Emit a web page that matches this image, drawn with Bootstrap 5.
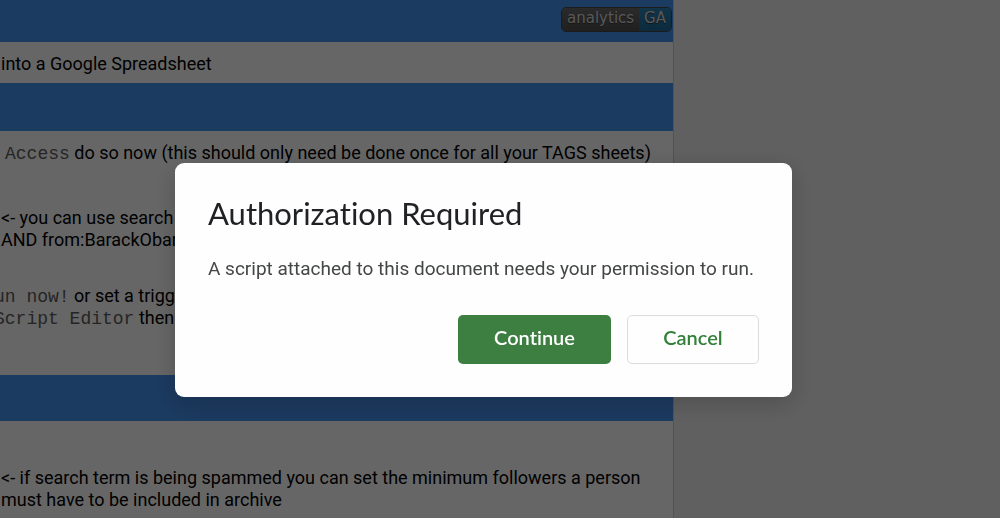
<!DOCTYPE html>
<html lang="en">
<head>
<meta charset="utf-8">
<meta name="viewport" content="width=device-width, initial-scale=1">
<title>Authorization Required</title>
<link href="https://cdn.jsdelivr.net/npm/bootstrap@5.3.0/dist/css/bootstrap.min.css" rel="stylesheet">
<style>
  body { background: #f0f0f0; font-family: Roboto, sans-serif; font-size: 18px; line-height: 22px; color: #000; overflow: hidden; }
  .sheet { width: 67.4%; background: #fff; border-right: 1px solid #d0d0d0; white-space: nowrap; }
  .band { background: #4693f0; min-height: 48px; }
  .band-top { min-height: 42px; padding: 7px 1px; }
  .band-last { min-height: 46px; }
  .line { padding: 11px 1px 8px; }
  .line-tall { padding-top: 35px; padding-bottom: 0; }
  .line-run { padding-top: 34px; padding-bottom: 46px; }
  .line-last { padding-top: 46px; }
  .cut { margin-left: -7px; }
  .mono { font-family: "Liberation Mono", monospace; font-size: 18px; line-height: 20px; color: #5c5c5c; }
  .ga { font-family: "DejaVu Sans", sans-serif; font-size: 15px; line-height: 20px; border-radius: 5px; color: #ddd; text-shadow: 0 1px 1px #333; border: 1px solid #444; height: 25px; }
  .ga-name { background: linear-gradient(#6a6a6a, #505050); padding: 0 5px; }
  .ga-mark { background: linear-gradient(#2d84b8, #1f6a9c); padding: 0 5px; }
  .shade { background: rgba(0,0,0,.6); padding: 42px 33px 0 0; }
  .dialog-box { width: 617px; max-width: 100%; background: #fefefe; border-radius: 9px; padding: 33px; box-shadow: 0 6px 24px rgba(0,0,0,.2); }
  .dialog-box h1 { font-family: Lato, sans-serif; font-size: 31px; line-height: 34px; color: #202124; font-variant-ligatures: none; }
  .dialog-box p { font-size: 19px; line-height: 24px; color: #444746; margin: 27px 0 34px; white-space: nowrap; }
  .dialog-box .btn { font-family: Lato, sans-serif; font-size: 20px; line-height: 24px; height: 49px; padding: 8px 12px 14px; border-radius: 5px; font-weight: 600; font-variant-ligatures: none; }
  .btn-go, .btn-go:hover { background: #3c7f40; color: #fff; width: 153px; }
  .btn-no, .btn-no:hover { background: #fefefe; color: #32803a; border-color: #dadce0; width: 132px; }
</style>
</head>
<body>
<main class="sheet min-vh-100">
  <div class="band band-top d-flex justify-content-end">
    <span class="ga d-flex overflow-hidden"><span class="ga-name">analytics</span><span class="ga-mark">GA</span></span>
  </div>
  <div class="line">into a Google Spreadsheet</div>
  <div class="band"></div>
  <div class="line"><span class="mono ms-1">Access</span> do so now (this should only need be done once for all your TAGS sheets)</div>
  <div class="line line-tall">&lt;- you can use search<br>AND from:BarackObar</div>
  <div class="line line-run"><div class="cut"><span class="mono">un now!</span> or set a trigge<br><span class="mono">Script Editor</span> then</div></div>
  <div class="band band-last"></div>
  <div class="line line-last">&lt;- if search term is being spammed you can set the minimum followers a person<br>must have to be included in archive</div>
</main>
<div class="shade position-fixed top-0 start-0 w-100 h-100 d-flex align-items-center justify-content-center">
  <section class="dialog-box" role="dialog" aria-modal="true" aria-labelledby="dialogTitle">
    <h1 class="m-0 fw-normal" id="dialogTitle">Authorization Required</h1>
    <p>A script attached to this document needs your permission to run.</p>
    <div class="d-flex justify-content-end gap-3">
      <button type="button" class="btn btn-go">Continue</button>
      <button type="button" class="btn btn-no">Cancel</button>
    </div>
  </section>
</div>
<script src="https://cdn.jsdelivr.net/npm/bootstrap@5.3.0/dist/js/bootstrap.bundle.min.js"></script>
</body>
</html>
